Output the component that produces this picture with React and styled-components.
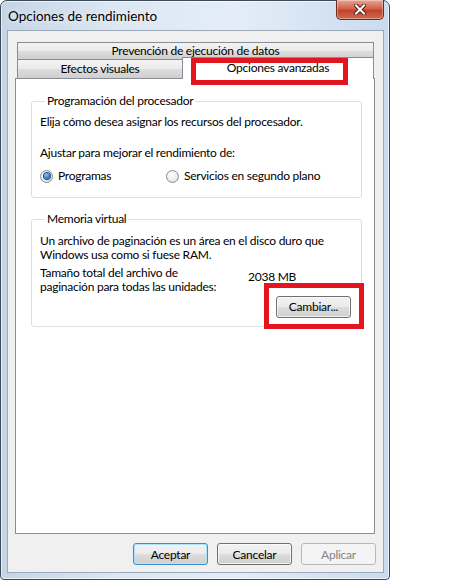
import styled, { createGlobalStyle } from "styled-components";

const GlobalStyle = createGlobalStyle`
  html, body {
    margin: 0;
    padding: 0;
    background: #ffffff;
  }
  body {
    font-family: Lato, "Noto Sans", sans-serif;
    font-size: 12px;
    letter-spacing: -0.25px;
    color: #000;
  }
`;

const Page = styled.div`
  width: 450px;
  height: 580px;
  overflow: hidden;
`;

const Window = styled.div`
  width: 388px;
  height: 578px;
  border: 1px solid #3c4a5a;
  border-radius: 7px 7px 4px 4px;
  background: linear-gradient(90deg, #c5d5e6 0%, #dce7f3 30%, #e4edf7 60%, #c9dcef 100%);
  display: flex;
  flex-direction: column;
  box-shadow: inset 0 0 0 1px rgba(255, 255, 255, 0.6);
`;

const TitleBar = styled.div`
  height: 29px;
  display: flex;
  justify-content: space-between;
  align-items: flex-start;
  padding: 0 5px 0 7px;
`;

const Title = styled.span`
  font-size: 13.5px;
  letter-spacing: 0;
  line-height: 14px;
  margin-top: 8px;
  color: #000;
  text-shadow: 0 0 6px rgba(255, 255, 255, 0.9);
`;

const CloseButton = styled.div`
  width: 46px;
  height: 19px;
  margin-top: -1px;
  border: 1px solid #6a2a22;
  border-top: none;
  border-radius: 0 0 5px 5px;
  background: linear-gradient(180deg, #e8a493 0%, #d0634d 45%, #c0432c 55%, #d26a4e 100%);
  display: flex;
  align-items: center;
  justify-content: center;
  box-shadow: inset 0 0 0 1px rgba(255, 255, 255, 0.35);
`;

const Client = styled.div`
  flex: 1;
  margin: 0 5px 6px 6px;
  border: 1px solid #9aa8b8;
  background: #f0f0f0;
  padding: 11px 8px 7px 7px;
  display: flex;
  flex-direction: column;
`;

const TabStrip = styled.div`
  display: flex;
  flex-direction: column;
  padding: 0 1px 0 2px;
  position: relative;
  z-index: 1;
`;

const TabRow = styled.div`
  display: flex;
  height: ${(p) => p.$h}px;
`;

const Tab = styled.div`
  width: ${(p) => (p.$w ? `${p.$w}px` : "auto")};
  flex: ${(p) => (p.$w ? "none" : 1)};
  border: 1px solid #898c95;
  border-bottom: none;
  background: linear-gradient(180deg, #f3f3f3 0%, #ebebeb 50%, #dddddd 51%, #cfcfcf 100%);
  display: flex;
  align-items: center;
  justify-content: center;
  padding-bottom: 1px;
  box-sizing: border-box;
  & + & {
    border-left: none;
  }
`;

const ActiveTab = styled.div`
  flex: 1;
  position: relative;
  margin: -2px 0 -1px -1px;
  border: 1px solid #898c95;
  border-bottom: none;
  background: #ffffff;
  display: flex;
  align-items: center;
  justify-content: center;
  padding-bottom: 3px;
`;

const Highlight = styled.div`
  position: absolute;
  left: ${(p) => p.$l}px;
  top: ${(p) => p.$t}px;
  width: ${(p) => p.$w}px;
  height: ${(p) => p.$h}px;
  border: 5px solid #e3151f;
  box-sizing: border-box;
  pointer-events: none;
`;

const Panel = styled.div`
  flex: 1;
  background: #ffffff;
  border: 1px solid #898c95;
  padding: 15px 12px 0 15px;
  display: flex;
  flex-direction: column;
  gap: 14px;
`;

const Group = styled.fieldset`
  margin: 0;
  border: 1px solid #d5dfe5;
  border-radius: 3px;
  padding: ${(p) => p.$pad};
  line-height: 14px;
  display: flex;
  flex-direction: column;
  min-width: 0;
  white-space: nowrap;
`;

const Legend = styled.legend`
  padding: 0 2px;
  margin-left: 5px;
  line-height: 14px;
`;

const Line = styled.div`
  margin-top: ${(p) => p.$mt || 0}px;
`;

const RadioRow = styled.div`
  display: flex;
  align-items: center;
  margin-top: 9px;
`;

const RadioItem = styled.label`
  display: flex;
  align-items: center;
  gap: 5px;
  width: ${(p) => p.$w}px;
`;

const Radio = styled.span`
  width: 11px;
  height: 11px;
  border-radius: 50%;
  border: 1px solid #8d8d8d;
  background: radial-gradient(circle at 40% 35%, #ffffff 0%, #f0f0f0 45%, #d6d6d6 100%);
  display: flex;
  align-items: center;
  justify-content: center;
  &::after {
    content: "";
    width: 6px;
    height: 6px;
    border-radius: 50%;
    display: ${(p) => (p.$on ? "block" : "none")};
    background: radial-gradient(circle at 40% 35%, #8ad0ff 0%, #2d7bc3 55%, #174a85 100%);
    box-shadow: 0 0 0 1px #1c4f8a;
  }
`;

const SizeRow = styled.div`
  display: flex;
  align-items: center;
  margin-top: 4px;
`;

const SizeLabel = styled.div`
  width: 208px;
`;

const SizeValue = styled.div`
  margin-top: -6px;
`;

const ChangeRow = styled.div`
  display: flex;
  justify-content: flex-end;
  margin-top: 2px;
  padding-right: 1px;
`;

const Button = styled.div`
  position: relative;
  width: 75px;
  height: 22px;
  box-sizing: border-box;
  border: 1px solid ${(p) => (p.$primary ? "#3c8ed0" : p.$disabled ? "#b5b9bc" : "#707070")};
  border-radius: 3px;
  background: ${(p) =>
    p.$disabled
      ? "#f4f4f4"
      : "linear-gradient(180deg, #f2f2f2 0%, #ebebeb 50%, #dddddd 51%, #cfcfcf 100%)"};
  box-shadow: ${(p) =>
    p.$primary
      ? "inset 0 0 0 1px #aee3fb"
      : p.$disabled
      ? "none"
      : "inset 0 0 0 1px rgba(255,255,255,0.7)"};
  color: ${(p) => (p.$disabled ? "#838383" : "#000")};
  display: flex;
  align-items: center;
  justify-content: center;
`;

const Footer = styled.div`
  display: flex;
  justify-content: flex-end;
  gap: 9px;
  margin: 9px -1px 0 0;
`;

const App = () => {
  return (
    <Page>
      <GlobalStyle />
      <Window>
        <TitleBar>
          <Title>Opciones de rendimiento</Title>
          <CloseButton>
            <svg width="12" height="11" viewBox="0 0 12 11">
              <path
                d="M2 1.5 L10 9.5 M10 1.5 L2 9.5"
                stroke="#5a1c14"
                strokeWidth="4"
                strokeLinecap="square"
              />
              <path
                d="M2 1.5 L10 9.5 M10 1.5 L2 9.5"
                stroke="#ffffff"
                strokeWidth="2"
                strokeLinecap="square"
              />
            </svg>
          </CloseButton>
        </TitleBar>
        <Client>
          <TabStrip>
            <TabRow $h={17}>
              <Tab>Prevención de ejecución de datos</Tab>
            </TabRow>
            <TabRow $h={19}>
              <Tab $w={166}>Efectos visuales</Tab>
              <ActiveTab>
                Opciones avanzadas
                <Highlight $l={8} $t={0} $w={157} $h={27} />
              </ActiveTab>
            </TabRow>
          </TabStrip>
          <Panel>
            <Group $pad="7px 9px 14px 8px">
              <Legend>Programación del procesador</Legend>
              <Line>Elija cómo desea asignar los recursos del procesador.</Line>
              <Line $mt={17}>Ajustar para mejorar el rendimiento de:</Line>
              <RadioRow>
                <RadioItem $w={126}>
                  <Radio $on />
                  Programas
                </RadioItem>
                <RadioItem $w={180}>
                  <Radio />
                  Servicios en segundo plano
                </RadioItem>
              </RadioRow>
            </Group>
            <Group $pad="8px 9px 8px 8px">
              <Legend>Memoria virtual</Legend>
              <Line>Un archivo de paginación es un área en el disco duro que</Line>
              <Line>Windows usa como si fuese RAM.</Line>
              <SizeRow>
                <SizeLabel>
                  Tamaño total del archivo de
                  <br />
                  paginación para todas las unidades:
                </SizeLabel>
                <SizeValue>2038 MB</SizeValue>
              </SizeRow>
              <ChangeRow>
                <Button>
                  Cambiar...
                  <Highlight $l={-13} $t={-14} $w={100} $h={46} />
                </Button>
              </ChangeRow>
            </Group>
          </Panel>
          <Footer>
            <Button $primary>Aceptar</Button>
            <Button>Cancelar</Button>
            <Button $disabled>Aplicar</Button>
          </Footer>
        </Client>
      </Window>
    </Page>
  );
};

export default App;
